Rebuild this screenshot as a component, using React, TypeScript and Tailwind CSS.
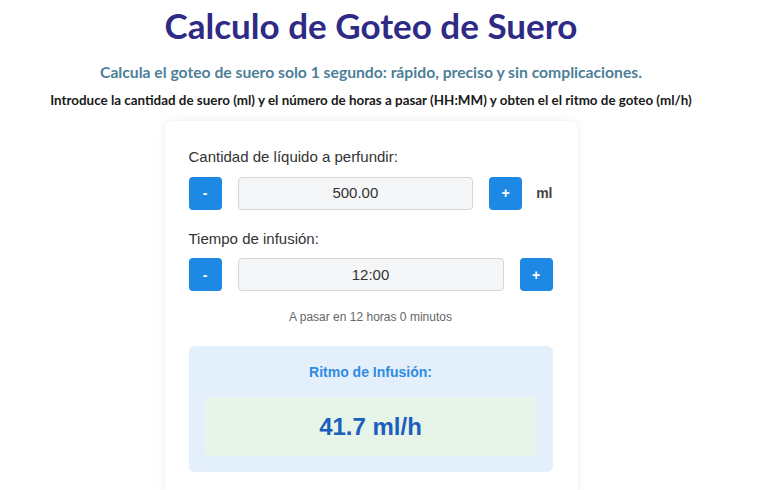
import { useState } from 'react';

const heading = { fontFamily: 'Lato, "Open Sans", sans-serif' };
const body = { fontFamily: '"Liberation Sans", Arial, sans-serif' };

function StepButton({ label, onClick }: { label: string; onClick: () => void }) {
  return (
    <button
      onClick={onClick}
      className="w-[33px] h-[33px] shrink-0 rounded-[4px] bg-[#1e88e5] text-white text-sm font-bold flex items-center justify-center"
    >
      {label}
    </button>
  );
}

export default function App() {
  const [ml, setMl] = useState(500);
  const [mins, setMins] = useState(12 * 60);

  const hours = Math.floor(mins / 60);
  const rest = mins % 60;
  const time = `${String(hours).padStart(2, '0')}:${String(rest).padStart(2, '0')}`;
  const rate = mins > 0 ? (ml / (mins / 60)).toFixed(1) : '0.0';

  return (
    <div className="min-h-[490px] bg-white overflow-hidden">
      <div className="w-[742px] flex flex-col items-center">
        <h1 className="text-[35px] font-bold text-[#2e2a85] leading-none mt-[8px]" style={heading}>
          Calculo de Goteo de Suero
        </h1>
        <p className="mt-[20px] text-[15.7px] font-bold text-[#4d7f99] leading-tight" style={heading}>
          Calcula el goteo de suero solo 1 segundo: rápido, preciso y sin complicaciones.
        </p>
        <p className="mt-[9px] text-[13.4px] font-bold text-[#1a1a1a] leading-tight" style={heading}>
          Introduce la cantidad de suero (ml) y el número de horas a pasar (HH:MM) y obten el el ritmo de goteo (ml/h)
        </p>

        <div
          className="mt-[13px] w-[413px] rounded-[8px] bg-white shadow-[0_0_10px_rgba(0,0,0,0.08)] pl-[24px] pr-[25px] pt-[25px] pb-6"
          style={body}
        >
          <label className="block text-[15px] text-[#333] mb-[8px]">Cantidad de líquido a perfundir:</label>
          <div className="flex items-center">
            <StepButton label="-" onClick={() => setMl(Math.max(0, ml - 50))} />
            <div className="ml-4 w-[236px] h-[33px] rounded-[4px] border border-[#d6d6d6] bg-[#f5f6f8] flex items-center justify-center text-[15px] text-[#333]">
              {ml.toFixed(2)}
            </div>
            <div className="ml-4">
              <StepButton label="+" onClick={() => setMl(ml + 50)} />
            </div>
            <span className="ml-[14px] text-sm font-bold text-[#444]">ml</span>
          </div>

          <label className="block text-[15px] text-[#333] mt-[18px] mb-[8px]">Tiempo de infusión:</label>
          <div className="flex items-center gap-4">
            <StepButton label="-" onClick={() => setMins(Math.max(0, mins - 30))} />
            <div className="flex-1 h-[33px] rounded-[4px] border border-[#d6d6d6] bg-[#f5f6f8] flex items-center justify-center text-[15px] text-[#333]">
              {time}
            </div>
            <StepButton label="+" onClick={() => setMins(mins + 30)} />
          </div>

          <p className="mt-[18px] text-center text-xs text-[#666]">
            A pasar en {hours} horas {rest} minutos
          </p>

          <div className="mt-[21px] rounded-[6px] bg-[#e3f0fc] px-4 pt-[16px] pb-4">
            <p className="text-center text-sm font-bold text-[#2e8be3]">Ritmo de Infusión:</p>
            <div className="mt-[15px] rounded-[4px] bg-[#e7f4e8] h-[59px] flex items-center justify-center text-[24px] font-bold text-[#1c5fbd]">
              {rate} ml/h
            </div>
          </div>
        </div>
      </div>
    </div>
  );
}
